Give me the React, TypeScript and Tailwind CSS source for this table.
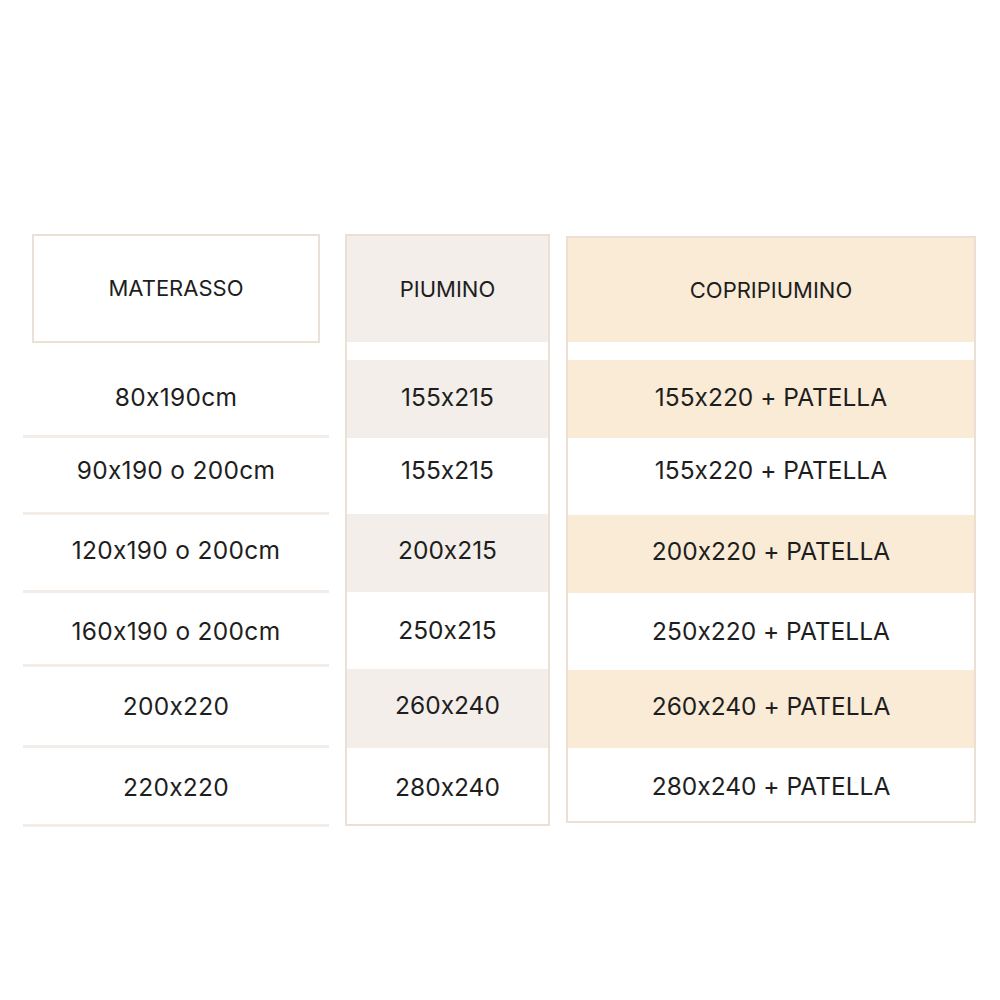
import React from "react";

const mat = [
  { t: "80x190cm", c: "h-[95px] pt-[16px]" },
  { t: "90x190 o 200cm", c: "h-[77px] pb-[10px]" },
  { t: "120x190 o 200cm", c: "h-[78px] pb-[5px]" },
  { t: "160x190 o 200cm", c: "h-[74px] pt-[5px]" },
  { t: "200x220", c: "h-[81px]" },
  { t: "220x220", c: "h-[79px] pt-[2px]" },
];

const piu = [
  { t: "155x215", c: "h-[78px] pb-[4px] bg-[#f3eee9]" },
  { t: "155x215", c: "h-[76px] pb-[12px]" },
  { t: "200x215", c: "h-[78px] pb-[6px] bg-[#f3eee9]" },
  { t: "250x215", c: "h-[77px]" },
  { t: "260x240", c: "h-[79px] pb-[6px] bg-[#f3eee9]" },
  { t: "280x240", c: "h-[76px] pt-[2px]" },
];

const cop = [
  { t: "155x220 + PATELLA", c: "h-[78px] pb-[4px] bg-[#faebd7]" },
  { t: "155x220 + PATELLA", c: "h-[77px] pb-[12px]" },
  { t: "200x220 + PATELLA", c: "h-[78px] pb-[6px] bg-[#faebd7]" },
  { t: "250x220 + PATELLA", c: "h-[77px]" },
  { t: "260x240 + PATELLA", c: "h-[78px] pb-[6px] bg-[#faebd7]" },
  { t: "280x240 + PATELLA", c: "h-[73px] pt-[4px]" },
];

export default function App() {
  return (
    <div className="w-[1000px] h-[1000px] bg-white text-[#1e1e1e] font-['Inter',sans-serif] [font-feature-settings:'calt'_0]">
      <div className="flex items-start gap-4 pl-[23px] pr-[24px] pt-[234px]">
        {/* MATERASSO */}
        <div className="w-[306px] flex flex-col">
          <div className="mx-[9px] h-[109px] border-2 border-[#ecdfd3] flex items-center justify-center text-[22px]">
            MATERASSO
          </div>
          {mat.map((r, i) => (
            <div key={i} className={`${r.c} border-b-[3px] border-[#f4ede7] flex items-center justify-center text-[24.5px] tracking-[0.3px]`}>
              {r.t}
            </div>
          ))}
        </div>
        {/* PIUMINO */}
        <div className="w-[205px] border-2 border-[#ecdfd3] flex flex-col">
          <div className="h-[106px] bg-[#f3eee9] flex items-center justify-center text-[22px]">
            PIUMINO
          </div>
          <div className="h-[18px]" />
          {piu.map((r, i) => (
            <div key={i} className={`${r.c} flex items-center justify-center text-[24.5px]`}>
              {r.t}
            </div>
          ))}
        </div>
        {/* COPRIPIUMINO */}
        <div className="flex-1 mt-[2px] border-2 border-[#ecdfd3] flex flex-col">
          <div className="h-[104px] bg-[#faebd7] flex items-center justify-center text-[22px]">
            COPRIPIUMINO
          </div>
          <div className="h-[18px]" />
          {cop.map((r, i) => (
            <div key={i} className={`${r.c} flex items-center justify-center text-[24.5px]`}>
              {r.t}
            </div>
          ))}
        </div>
      </div>
    </div>
  );
}
